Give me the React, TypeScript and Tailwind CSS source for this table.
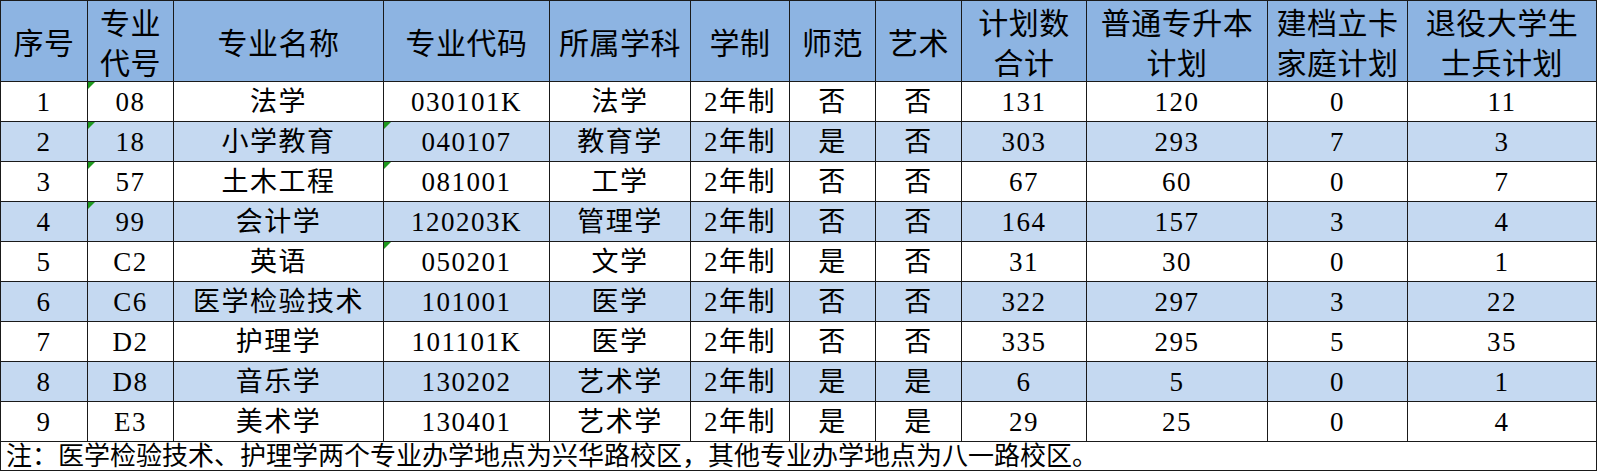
const cols = "grid-cols-[86px_85px_209px_165px_140px_98px_85px_85px_124px_180px_139px_188px]";

const head: string[][] = [
  ["序号"],
  ["专业", "代号"],
  ["专业名称"],
  ["专业代码"],
  ["所属学科"],
  ["学制"],
  ["师范"],
  ["艺术"],
  ["计划数", "合计"],
  ["普通专升本", "计划"],
  ["建档立卡", "家庭计划"],
  ["退役大学生", "士兵计划"],
];

// [row values, columns that carry the green "number as text" mark]
const rows: [string[], number[]][] = [
  [["1", "08", "法学", "030101K", "法学", "2年制", "否", "否", "131", "120", "0", "11"], [1]],
  [["2", "18", "小学教育", "040107", "教育学", "2年制", "是", "否", "303", "293", "7", "3"], [1, 3]],
  [["3", "57", "土木工程", "081001", "工学", "2年制", "否", "否", "67", "60", "0", "7"], [1, 3]],
  [["4", "99", "会计学", "120203K", "管理学", "2年制", "否", "否", "164", "157", "3", "4"], [1]],
  [["5", "C2", "英语", "050201", "文学", "2年制", "是", "否", "31", "30", "0", "1"], [3]],
  [["6", "C6", "医学检验技术", "101001", "医学", "2年制", "否", "否", "322", "297", "3", "22"], []],
  [["7", "D2", "护理学", "101101K", "医学", "2年制", "否", "否", "335", "295", "5", "35"], []],
  [["8", "D8", "音乐学", "130202", "艺术学", "2年制", "是", "是", "6", "5", "0", "1"], []],
  [["9", "E3", "美术学", "130401", "艺术学", "2年制", "是", "是", "29", "25", "0", "4"], []],
];

function Mark() {
  return (
    <svg className="absolute left-0 top-0" width="7" height="7" viewBox="0 0 7 7">
      <polygon points="0,0 7,0 0,7" fill="#1f9a1f" />
    </svg>
  );
}

export default function App() {
  return (
    <div className="w-[1600px] h-[473px] bg-white font-['Liberation_Serif','Noto_Sans_CJK_SC',serif] text-black">
      <div className={`grid ${cols} w-[1597px] gap-px bg-[#1a1a1a] p-px`}>
        {head.map((lines, i) => (
          <div
            key={i}
            className="h-[80px] bg-[#8db4e2] flex flex-col items-center justify-center pt-[5px] text-[30px] leading-[40px] tracking-[0.5px] whitespace-nowrap"
          >
            {lines.map((l) => (
              <span key={l}>{l}</span>
            ))}
          </div>
        ))}
        {rows.map(([vals, marks], r) =>
          vals.map((v, c) => (
            <div
              key={`${r}-${c}`}
              className={`relative h-[39px] flex items-center justify-center text-[27px] tracking-[1.5px] whitespace-nowrap ${
                r % 2 === 1 ? "bg-[#c5d9f1]" : "bg-white"
              }`}
            >
              {marks.includes(c) ? <Mark /> : null}
              <span className="leading-none pt-[2px]">{v}</span>
            </div>
          ))
        )}
        <div className="col-span-12 h-[28px] bg-white flex items-center pl-[5px] text-[26px] whitespace-nowrap">
          注：医学检验技术、护理学两个专业办学地点为兴华路校区，其他专业办学地点为八一路校区。
        </div>
      </div>
    </div>
  );
}
